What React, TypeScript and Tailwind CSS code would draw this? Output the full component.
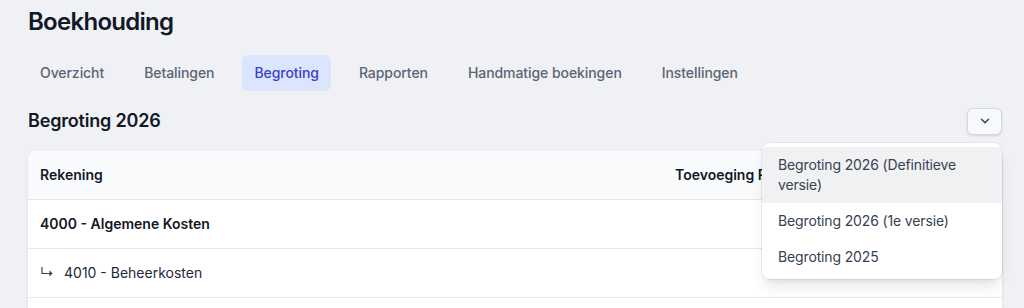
import { ChevronDown } from 'lucide-react';

const tabs = ['Overzicht', 'Betalingen', 'Begroting', 'Rapporten', 'Handmatige boekingen', 'Instellingen'];

const versions = ['Begroting 2026 (Definitieve versie)', 'Begroting 2026 (1e versie)', 'Begroting 2025'];

export default function App() {
  return (
    <div className="h-[308px] overflow-hidden bg-[#f0f1f5] pl-[28px] pr-[22px] pt-[6px] font-['Inter',sans-serif] text-gray-900">
      <h1 className="text-2xl leading-8 font-semibold tracking-[-0.03em] text-[#111827]">Boekhouding</h1>

      {/* Tabs */}
      <nav className="mt-[17px] flex gap-4">
        {tabs.map((tab) => (
          <button
            key={tab}
            className={
              tab === 'Begroting'
                ? 'h-9 rounded-md bg-[#dbe5fe] px-3 text-sm font-medium tracking-[-0.005em] text-[#3b3fc9]'
                : 'h-9 rounded-md px-3 text-sm font-medium tracking-[-0.005em] text-[#5b6475]'
            }
          >
            {tab}
          </button>
        ))}
      </nav>

      {/* Budget header */}
      <div className="relative mt-4 flex items-center justify-between">
        <h2 className="text-lg leading-7 font-semibold tracking-[-0.01em] text-[#111827]">Begroting 2026</h2>
        <button className="flex h-[27px] w-[35px] items-center justify-center rounded-md border border-[#d5d8de] bg-[#f8f9fb] shadow-sm">
          <ChevronDown className="h-3.5 w-3.5 text-gray-700" strokeWidth={2.5} />
        </button>

        {/* Version menu */}
        <div className="absolute right-0 top-[36px] z-10 w-[240px] rounded-lg bg-white py-1 shadow-lg ring-1 ring-black/5">
          {versions.map((v, i) => (
            <div
              key={v}
              className={
                i === 0
                  ? 'bg-[#f0f1f3] px-4 py-2 text-sm leading-5 tracking-[-0.01em] text-[#374151]'
                  : 'px-4 py-2 text-sm leading-5 tracking-[-0.01em] text-[#374151]'
              }
            >
              {v}
            </div>
          ))}
        </div>
      </div>

      {/* Table */}
      <div className="mt-4 overflow-hidden rounded-t-lg bg-white shadow-sm">
        <div className="flex h-[49px] items-center border-b border-[#e5e7eb] bg-[#f9fafb] px-3 text-sm font-semibold text-[#111827]">
          <div className="flex-1">Rekening</div>
          <div className="w-[315px]">Toevoeging Reserve</div>
        </div>
        <div className="flex h-[49px] items-center border-b border-[#e5e7eb] px-3 text-sm font-semibold text-[#111827]">
          4000 - Algemene Kosten
        </div>
        <div className="flex h-[49px] items-center border-b border-[#e5e7eb] px-3 text-sm text-[#1f2937]">
          <span className="w-6 text-[#374151]">↳</span>
          4010 - Beheerkosten
        </div>
        <div className="h-[49px]" />
      </div>
    </div>
  );
}
